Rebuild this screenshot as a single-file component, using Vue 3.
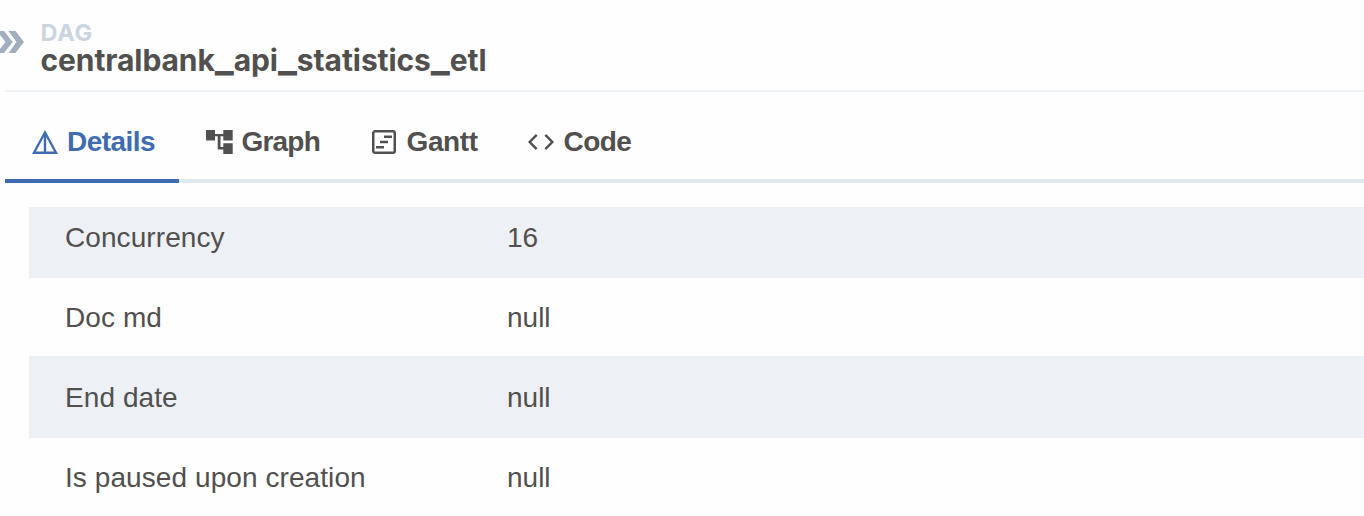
<script setup>
const titleParts = 'centralbank_api_statistics_etl'.split(/(_)/)
const rows = [
  { label: 'Concurrency', value: '16' },
  { label: 'Doc md', value: 'null' },
  { label: 'End date', value: 'null' },
  { label: 'Is paused upon creation', value: 'null' },
]
</script>

<template>
  <main class="page">
    <header class="header">
      <svg class="chevrons" width="24" height="22" viewBox="0 0 24 22">
        <path d="M-3 0H4L12.7 11L4 22H-3L5.5 11ZM8.5 0H15.5L24 11L15.5 22H8.5L16.5 11Z" />
      </svg>
      <div class="heading">
        <div class="kind">DAG</div>
        <h1 class="title"><span v-for="(part, i) in titleParts" :key="i" :class="{ underscore: part === '_' }">{{ part }}</span></h1>
      </div>
    </header>
    <nav class="tabs">
      <a class="tab details active">
        <svg width="26" height="24" viewBox="0 0 26 24">
          <path fill="currentColor" fill-rule="evenodd" d="M13 0L26 24H0ZM11.8 6.9L4 21.5H11.8ZM14.2 6.9V21.5H22Z" />
        </svg>
        <span>Details</span>
      </a>
      <a class="tab graph">
        <svg width="28" height="24" viewBox="0 0 28 24">
          <path fill="currentColor" d="M0 0H9V4H17.3V0H26.7V10.5H17.3V6.3H14.5V17H17.3V13.3H26.7V24H17.3V19.5H11.7V6.3H9V10.5H0Z" />
        </svg>
        <span>Graph</span>
      </a>
      <a class="tab gantt">
        <svg width="24" height="24" viewBox="0 0 24 24">
          <rect x="1.25" y="1.25" width="21.5" height="21.5" rx="1.8" fill="none" stroke="currentColor" stroke-width="2.5" />
          <path fill="currentColor" d="M12 5.5H20V8H12ZM8 10.8H16V13.2H8ZM4 16H12V18.5H4Z" />
        </svg>
        <span>Gantt</span>
      </a>
      <a class="tab code">
        <svg width="26" height="16" viewBox="0 0 26 16">
          <path fill="none" stroke="currentColor" stroke-width="2.4" d="M8.7 .9L1.7 8L8.7 15.1M17.3 .9L24.3 8L17.3 15.1" />
        </svg>
        <span>Code</span>
      </a>
    </nav>
    <dl class="table">
      <div v-for="row in rows" :key="row.label" class="row">
        <dt>{{ row.label }}</dt>
        <dd>{{ row.value }}</dd>
      </div>
    </dl>
  </main>
</template>

<style>
body { margin: 0; background: #fff; }
</style>

<style scoped>
.page {
  box-sizing: border-box;
  width: 100%;
  height: 516px;
  overflow: hidden;
  background: #fefefe;
  color: #51504f;
  font-family: "Liberation Sans", Arial, sans-serif;
}
.header { display: flex; height: 92px; }
.header::after {
  content: "";
  position: absolute;
  left: 5px;
  right: 0;
  top: 90px;
  height: 2px;
  background: #edf2f7;
}
.chevrons { flex: none; margin-top: 31px; fill: #a0aec0; }
.heading {
  margin-left: 16.5px;
  padding-top: 20px;
  font-family: Inter, sans-serif;
  font-weight: 700;
}
.kind { font-size: 23.5px; line-height: 26px; color: #cbd5e0; letter-spacing: 0.7px; }
.title { margin: 0; font-size: 30px; line-height: 29px; font-weight: 700; letter-spacing: -0.09px; white-space: nowrap; }
.underscore { font-size: 40px; line-height: 0; }
.tabs {
  display: flex;
  box-sizing: border-box;
  height: 91px;
  margin-left: 5px;
  border-bottom: 4px solid #e2e8f0;
}
.tab {
  display: flex;
  flex: none;
  align-items: center;
  box-sizing: border-box;
  height: 91px;
  padding: 13px 24px 0 27px;
  border-bottom: 4px solid transparent;
  font-size: 28px;
  font-weight: 700;
  line-height: 32px;
  letter-spacing: -0.55px;
}
.tab svg { flex: none; }
.tab span { margin-left: 9px; white-space: nowrap; }
.active { width: 174px; color: #3f6cb1; border-color: #3f6cb1; }
.graph { width: 166px; letter-spacing: -0.8px; }
.graph span { margin-left: 7.5px; }
.gantt { width: 156px; letter-spacing: -0.4px; }
.gantt span { margin-left: 10.5px; }
.code { padding-left: 27px; }
.code span { margin-left: 9.5px; }
.table { margin: 24px 0 0 29px; font-size: 28px; line-height: 32px; letter-spacing: 0.08px; }
.row {
  display: grid;
  grid-template-columns: 442px 1fr;
  box-sizing: border-box;
  height: 78px;
  padding: 24px 0 0 36px;
}
.row:nth-child(odd) { background: #edf1f6; }
.row:nth-child(1) { height: 71px; padding-top: 15px; }
.row:nth-child(3) { height: 82px; padding-top: 26px; }
dt, dd { margin: 0; }
dd { letter-spacing: 0; }
</style>
